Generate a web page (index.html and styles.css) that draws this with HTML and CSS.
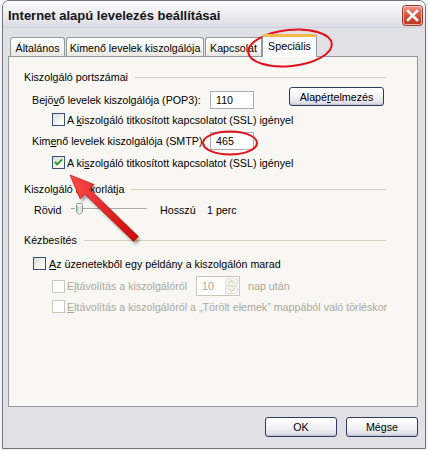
FILE: index.html
```html
<!DOCTYPE html>
<html lang="hu">
<head>
<meta charset="utf-8">
<title>Internet alapú levelezés beállításai</title>
<link rel="stylesheet" href="styles.css">
</head>
<body>
<div class="window">
  <div class="titlebar">
    <span class="title">Internet alapú levelezés beállításai</span>
    <span class="close" aria-label="Bezárás">
      <svg width="21" height="21" viewBox="0 0 21 21">
        <defs>
          <linearGradient id="cg" x1="0" y1="0" x2="0" y2="1">
            <stop offset="0" stop-color="#ef9f8e"/>
            <stop offset="0.45" stop-color="#d9543f"/>
            <stop offset="1" stop-color="#b8321f"/>
          </linearGradient>
        </defs>
        <rect x="0.5" y="0.5" width="20" height="20" rx="3" fill="url(#cg)" stroke="#9a3a30"/>
        <rect x="1.5" y="1.5" width="18" height="18" rx="2" fill="none" stroke="#f6d2ca" stroke-opacity="0.8"/>
        <path d="M6 6 L15 15 M15 6 L6 15" stroke="#fff" stroke-width="2.6" stroke-linecap="square"/>
      </svg>
    </span>
  </div>
  <div class="client">
    <div class="tabs">
      <div class="tab t1">Általános</div>
      <div class="tab t2">Kimenő levelek kiszolgálója</div>
      <div class="tab t3">Kapcsolat</div>
      <div class="tab t4 active">Speciális</div>
    </div>
    <div class="panel">
      <div class="group g1"><span>Kiszolgáló portszámai</span></div>
      <div class="row pop">
        <span class="lbl">Bejö<u>v</u>ő levelek kiszolgálója (POP3):</span>
        <span class="input">110</span>
        <span class="btn def">Alapé<u>r</u>telmezés</span>
      </div>
      <div class="row cbrow cb1">
        <span class="cb"></span>
        <span>A <u>k</u>iszolgáló titkosított kapcsolatot (SSL) igényel</span>
      </div>
      <div class="row smtp">
        <span class="lbl">Kim<u>e</u>nő levelek kiszolgálója (SMTP):</span>
        <span class="input">465</span>
      </div>
      <div class="row cbrow cb2">
        <span class="cb checked">
          <svg width="11" height="11" viewBox="0 0 11 11"><path d="M2 5 L4.2 7.4 L9 2.4" fill="none" stroke="#21a121" stroke-width="2"/></svg>
        </span>
        <span>A ki<u>s</u>zolgáló titkosított kapcsolatot (SSL) igényel</span>
      </div>
      <div class="group g2"><span>Kiszolgáló i<u>d</u>őkorlátja</span></div>
      <div class="row slider">
        <span class="sl-lbl">Rövid</span>
        <svg class="track" width="80" height="14" viewBox="0 0 80 14">
          <line x1="2" y1="5.5" x2="6" y2="5.5" stroke="#9a9a96"/>
          <line x1="14" y1="5.5" x2="78" y2="5.5" stroke="#a8a8a4"/>
          <line x1="14" y1="6.5" x2="78" y2="6.5" stroke="#ffffff"/>
          <path d="M7.5 1.5 Q7.5 0.5 8.5 0.5 L12.5 0.5 Q13.5 0.5 13.5 1.5 L13.5 9 L10.5 11.5 L7.5 9 Z" fill="#f4f6f2" stroke="#8c98a0"/>
          <line x1="9" y1="3" x2="9" y2="8.5" stroke="#7fc07a"/>
          <line x1="12" y1="3" x2="12" y2="8.5" stroke="#c3c8c0"/>
        </svg>
        <span class="hosszu">Hosszú</span>
        <span>1 perc</span>
      </div>
      <div class="group g3"><span>Kézbesítés</span></div>
      <div class="row cbrow cb3">
        <span class="cb"></span>
        <span><u>A</u>z üzenetekből egy példány a kiszolgálón marad</span>
      </div>
      <div class="row cbrow dis1 disabled">
        <span class="cb"></span>
        <span class="dlbl">E<u>l</u>távolítás a kiszolgálóról</span>
        <span class="spin">
          <span class="spin-val">10</span>
          <span class="spin-btns">
            <span class="sb"><svg width="7" height="4" viewBox="0 0 7 4"><path d="M0.5 3.5 L3.5 0.5 L6.5 3.5" fill="none" stroke="#c3c1b6"/></svg></span>
            <span class="sb"><svg width="7" height="4" viewBox="0 0 7 4"><path d="M0.5 0.5 L3.5 3.5 L6.5 0.5" fill="none" stroke="#c3c1b6"/></svg></span>
          </span>
        </span>
        <span class="nap">nap után</span>
      </div>
      <div class="row cbrow dis2 disabled">
        <span class="cb"></span>
        <span><u>E</u>ltávolítás a kiszolgálóról a „Törölt elemek” mappából való törléskor</span>
      </div>
    </div>
    <div class="buttons">
      <span class="btn ok">OK</span>
      <span class="btn">Mégse</span>
    </div>
  </div>
</div>
<svg class="annot" width="428" height="450" viewBox="0 0 428 450">
  <defs>
    <linearGradient id="ag" x1="0" y1="0" x2="1" y2="0">
      <stop offset="0" stop-color="#ff4a4a"/>
      <stop offset="1" stop-color="#c80a0a"/>
    </linearGradient>
    <filter id="sh" x="-20%" y="-20%" width="140%" height="140%">
      <feGaussianBlur stdDeviation="1.5"/>
    </filter>
  </defs>
  <ellipse cx="290" cy="48" rx="42" ry="18" transform="rotate(-6 290 48)" fill="none" stroke="#e3121c" stroke-width="2"/>
  <ellipse cx="230" cy="143" rx="27" ry="11.5" fill="none" stroke="#e3121c" stroke-width="2"/>
  <polygon points="72,178 96.2,187.5 91.6,192.2 140.4,239.5 135.6,244.5 86.8,197.2 82.2,201.9" fill="#000" fill-opacity="0.35" filter="url(#sh)"/>
  <polygon points="70,175 94.2,184.5 89.6,189.2 138.4,236.5 133.6,241.5 84.8,194.2 80.2,198.9" fill="url(#ag)" stroke="#b00000" stroke-width="0.6" stroke-linejoin="round"/>
</svg>
</body>
</html>
```
FILE: styles.css
```css
* { box-sizing: border-box; }
html, body { margin: 0; padding: 0; }
body {
  width: 428px;
  height: 450px;
  background: #f4f4f4;
  font-family: "Liberation Sans", Arial, sans-serif;
  font-size: 10.7px;
  color: #000;
  position: relative;
  overflow: hidden;
}
u { text-decoration: underline; text-underline-offset: 1px; }

.window {
  margin-left: 2px;
  width: 424px;
  height: 449px;
  border: 1px solid #73737f;
  border-radius: 7px 7px 0 0;
  background: #e1e0e5;
  display: flex;
  flex-direction: column;
}
.titlebar {
  height: 27px;
  flex: none;
  display: flex;
  align-items: center;
  padding: 3px 1px 0 5px;
  background: linear-gradient(#fcfcfd, #eeeef2 45%, #dcdce3);
  border-radius: 6px 6px 0 0;
  border-bottom: 1px solid #cfcfd8;
}
.title {
  flex: 1;
  font: bold 13px "Liberation Sans", Arial, sans-serif;
  color: #141414;
}
.close { width: 21px; height: 21px; display: block; margin-right: 1px; }
.close svg { display: block; }

.client {
  flex: 1;
  display: flex;
  flex-direction: column;
  padding: 6px 7px 10px 5px;
}

.tabs {
  display: flex;
  align-items: flex-end;
  height: 22px;
  padding-left: 2px;
  gap: 1px;
}
.tab {
  height: 19px;
  border: 1px solid #919b9c;
  border-bottom: none;
  border-radius: 3px 3px 0 0;
  background: linear-gradient(#ffffff, #f6f5f1 60%, #e8e7e1);
  display: flex;
  align-items: center;
  justify-content: center;
  white-space: nowrap;
  padding-top: 1px;
}
.t1 { width: 55px; }
.t2 { width: 138px; }
.t3 { width: 57px; }
.tab.active {
  width: 55px;
  height: 23px;
  margin-left: -1px;
  margin-bottom: -1px;
  background: #fcfcfe;
  border-top: 3px solid #f7b94c;
  position: relative;
  z-index: 1;
  padding-top: 0;
  padding-bottom: 3px;
}

.panel {
  height: 351px;
  flex: none;
  border: 1px solid #919b9c;
  background: #f8f7f4;
  padding: 0 31px 0 15px;
  display: flex;
  flex-direction: column;
}

.group {
  height: 14px;
  display: flex;
  align-items: center;
  gap: 7px;
  white-space: nowrap;
}
.group::after {
  content: "";
  flex: 1;
  height: 1px;
  background: #d0d0bf;
}
.g1 { margin-top: 13px; }
.g2 { margin-top: 13px; }
.g3 { margin-top: 16px; }

.row { display: flex; white-space: nowrap; }
.lbl { width: 178px; line-height: 18px; margin-left: 8px; }

.pop { margin-top: 3px; height: 22px; align-items: flex-start; }
.pop .lbl, .pop .input { margin-top: 4px; }
.smtp { margin-top: 6px; height: 18px; align-items: center; }

.input {
  width: 44px;
  height: 18px;
  border: 1px solid #a5acb5;
  background: #fff;
  padding-left: 5px;
  line-height: 16px;
}

.btn {
  display: flex;
  align-items: center;
  justify-content: center;
  border: 1px solid #2e3b5f;
  border-radius: 3px;
  background: linear-gradient(#ffffff, #f5f5f8 45%, #e4e4ec 80%, #d4d4df);
  box-shadow: inset 0 -1px 0 #c4c4d2, inset 0 1px 0 #ffffff;
}
.def { width: 95px; height: 19px; margin-left: 35px; }

.cbrow { align-items: center; gap: 2px; margin-left: 28px; }
.cb {
  width: 13px;
  height: 13px;
  flex: none;
  border: 1px solid #36507a;
  background: linear-gradient(135deg, #dcdcd7, #fbfbf9 80%);
  display: flex;
  align-items: center;
  justify-content: center;
}
.cb svg { display: block; }
.cb1 { margin-top: 4px; height: 13px; }
.cb2 { margin-top: 6px; height: 13px; }
.cb3 { margin-top: 10px; height: 13px; margin-left: 9px; gap: 3px; }

.slider { margin-top: 7px; height: 14px; align-items: center; margin-left: 10px; }
.sl-lbl { width: 35px; }
.track { display: block; flex: none; }
.hosszu { margin-left: 11px; width: 47px; }

.disabled { color: #aca899; }
.disabled .cb { border-color: #cac8bb; background: #fff; }
.dis1 { margin-top: 6px; height: 20px; }
.dis2 { margin-top: 4px; height: 13px; }
.dlbl { width: 127px; }

.spin {
  width: 44px;
  height: 20px;
  border: 1px solid #c9c7ba;
  background: #fff;
  display: flex;
  justify-content: space-between;
}
.spin-val { padding-left: 5px; line-height: 18px; }
.spin-btns {
  width: 15px;
  display: flex;
  flex-direction: column;
  padding: 1px;
  gap: 0;
}
.sb {
  flex: 1;
  display: flex;
  align-items: center;
  justify-content: center;
  background: #f3f3ef;
  border: 1px solid #e2e1da;
  border-radius: 2px;
}
.sb svg { display: block; }
.nap { margin-left: 6px; }

.buttons {
  display: flex;
  justify-content: flex-end;
  gap: 9px;
  margin-top: 10px;
}
.buttons .btn { width: 72px; height: 20px; }

.annot {
  position: absolute;
  left: 0;
  top: 0;
  pointer-events: none;
}
```
